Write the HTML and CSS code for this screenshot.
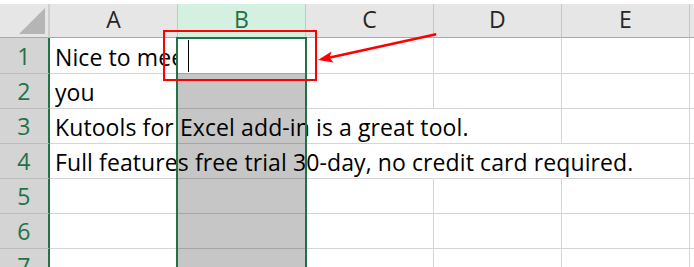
FILE: index.html
```html
<!DOCTYPE html>
<html lang="en">

<head>
    <meta charset="UTF-8">
    <title>Sheet1</title>
    <link rel="stylesheet" href="styles.css">
</head>

<body>
    <div class="sheet">
        <!-- Column headers -->
        <div class="corner">
            <svg width="48" height="33" viewBox="0 0 48 33"><polygon points="45,4 45,30 19,30" fill="#b5b5b5" /></svg>
        </div>
        <div class="col-head">A</div>
        <div class="col-head active">B</div>
        <div class="col-head">C</div>
        <div class="col-head">D</div>
        <div class="col-head">E</div>
        <div class="col-head last"></div>

        <!-- Row 1 -->
        <div class="row-head">1</div>
        <div class="cell clip"><span class="value">Nice to meet</span></div>
        <div class="cell sel editing"><span class="caret"></span></div>
        <div class="cell"></div>
        <div class="cell"></div>
        <div class="cell"></div>
        <div class="cell last"></div>

        <!-- Row 2 -->
        <div class="row-head">2</div>
        <div class="cell"><span class="value">you</span></div>
        <div class="cell sel"></div>
        <div class="cell"></div>
        <div class="cell"></div>
        <div class="cell"></div>
        <div class="cell last"></div>

        <!-- Row 3 -->
        <div class="row-head">3</div>
        <div class="cell flow"><span class="value">Kutools for Excel add-in is a great tool.</span></div>
        <div class="cell sel flow"></div>
        <div class="cell flow"></div>
        <div class="cell"></div>
        <div class="cell"></div>
        <div class="cell last"></div>

        <!-- Row 4 -->
        <div class="row-head">4</div>
        <div class="cell flow"><span class="value">Full features free trial 30-day, no credit card required.</span></div>
        <div class="cell sel flow"></div>
        <div class="cell flow"></div>
        <div class="cell flow"></div>
        <div class="cell"></div>
        <div class="cell last"></div>

        <!-- Rows 5 - 7 -->
        <div class="row-head">5</div>
        <div class="cell"></div>
        <div class="cell sel"></div>
        <div class="cell"></div>
        <div class="cell"></div>
        <div class="cell"></div>
        <div class="cell last"></div>

        <div class="row-head">6</div>
        <div class="cell"></div>
        <div class="cell sel"></div>
        <div class="cell"></div>
        <div class="cell"></div>
        <div class="cell"></div>
        <div class="cell last"></div>

        <div class="row-head">7</div>
        <div class="cell"></div>
        <div class="cell sel"></div>
        <div class="cell"></div>
        <div class="cell"></div>
        <div class="cell"></div>
        <div class="cell last"></div>

        <!-- Selected column outline -->
        <div class="selection"></div>
    </div>

    <!-- Red callout -->
    <svg class="callout" width="694" height="267" viewBox="0 0 694 267">
        <rect x="164" y="31" width="152" height="49" fill="none" stroke="#ff0000" stroke-width="2" />
        <line x1="435" y1="34.5" x2="330" y2="57.5" stroke="#ff0000" stroke-width="2.8" stroke-linecap="round" />
        <polygon points="318,60 331.5,51.6 329.5,57.4 333.5,62.6" fill="#ff0000" />
    </svg>
</body>

</html>
```
FILE: styles.css
```css
body {
    margin: 0;
    width: 694px;
    height: 267px;
    overflow: hidden;
    background-color: white;
    font-family: 'Open Sans', 'Liberation Sans', sans-serif;
    font-size: 23px;
    letter-spacing: 0.1px;
    position: relative;
}

.sheet {
    margin-top: 4px;
    display: grid;
    grid-template-columns: 50px repeat(5, 128px) 1fr;
    grid-template-rows: 34px 36px repeat(6, 35px);
    position: relative;
}

.sheet > div {
    box-sizing: border-box;
}

/* Header row */
.corner,
.col-head {
    background-color: #e6e6e6;
    border-right: 1px solid #c6c6c6;
    border-bottom: 1px solid #a9a9a9;
}

.corner {
    border-right: 2px solid #cfcfcf;
}

.corner svg {
    display: block;
}

.col-head {
    display: flex;
    align-items: flex-end;
    justify-content: center;
    color: #262626;
    line-height: 24px;
    padding-bottom: 6px;
}

.col-head.active {
    background-color: #d3f0e0;
    color: #217346;
}

.col-head.last {
    border-right: none;
}

/* Row headers (all highlighted, the whole column is selected) */
.row-head {
    background-color: #d4d4d4;
    border-right: 2px solid #217346;
    border-bottom: 1px solid #bcbcbc;
    color: #217346;
    display: flex;
    align-items: flex-end;
    justify-content: center;
    line-height: 24px;
    padding-bottom: 5px;
}

/* Cells */
.cell {
    border-right: 1px solid #d4d4d4;
    border-bottom: 1px solid #d4d4d4;
    display: flex;
    align-items: flex-end;
    padding: 0 0 4px 5px;
    line-height: 24px;
    color: #000;
    min-width: 0;
}

.cell.last {
    border-right: none;
}

.cell.flow {
    border-right-color: transparent;
}

.cell.clip {
    overflow: hidden;
}

.cell.sel {
    background-color: #c6c6c6;
    border-bottom-color: #a6a6a6;
}

.cell.sel.editing {
    background-color: white;
    align-items: center;
    padding: 0 0 0 10px;
}

.value {
    white-space: nowrap;
    position: relative;
    z-index: 1;
}

.caret {
    width: 1px;
    height: 32px;
    background-color: black;
    margin-top: 1px;
}

.selection {
    position: absolute;
    left: 176px;
    top: 33px;
    width: 131px;
    height: 260px;
    border: 2px solid #217346;
    z-index: 2;
}

.callout {
    position: absolute;
    left: 0;
    top: 0;
    z-index: 3;
}
```
